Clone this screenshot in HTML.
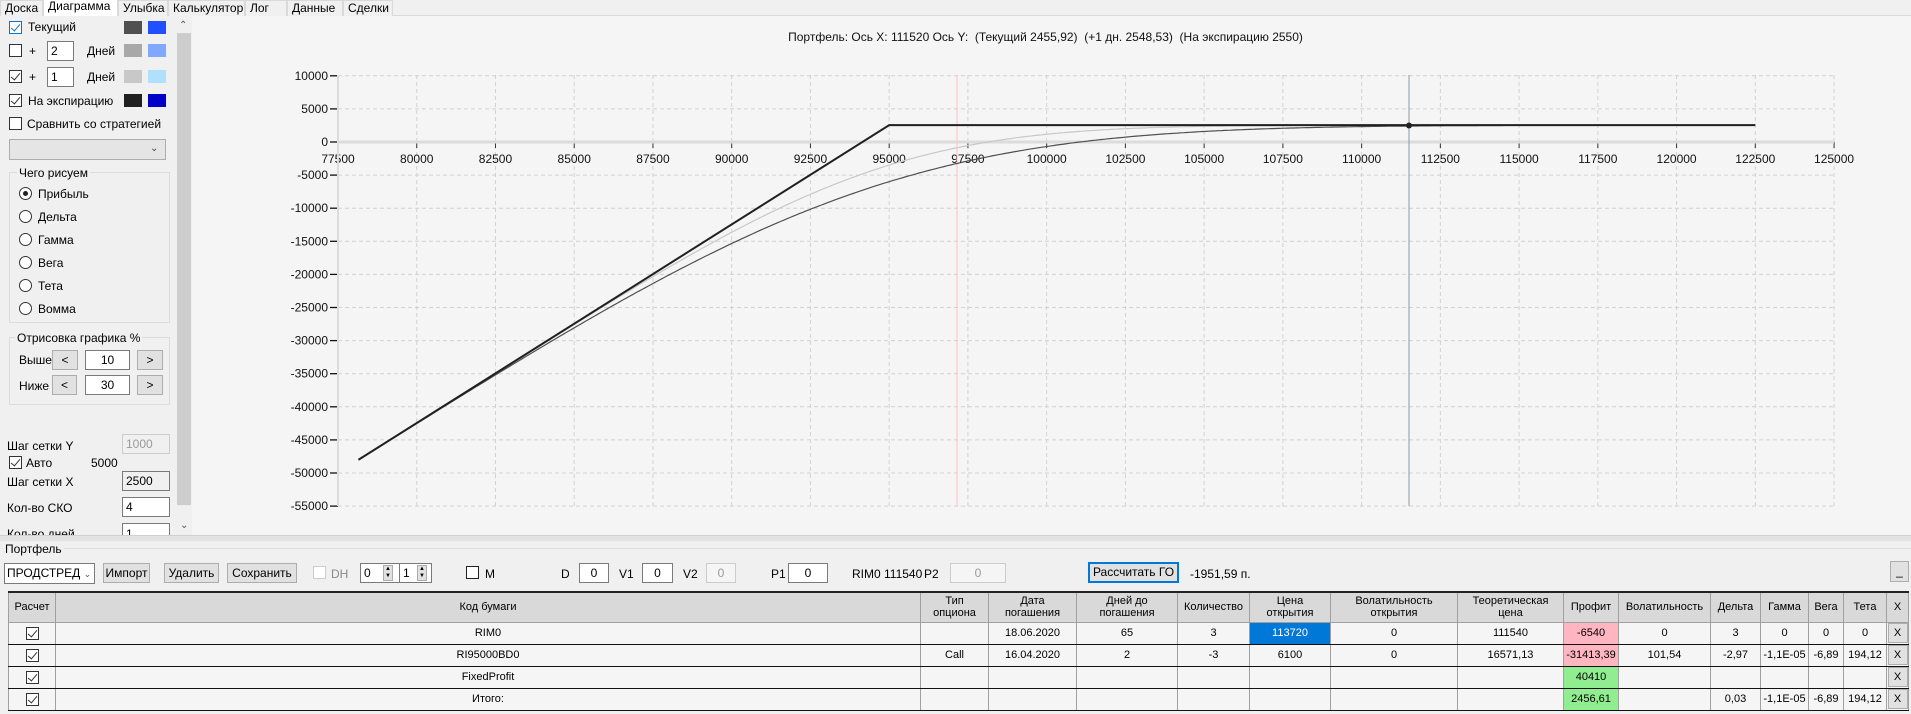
<!DOCTYPE html>
<html><head><meta charset="utf-8"><style>
*{box-sizing:border-box;margin:0;padding:0}
body{width:1911px;height:714px;background:#f0f0f0;font-family:"Liberation Sans",sans-serif;font-size:12px;color:#000;position:relative;overflow:hidden}
.a{position:absolute;white-space:nowrap}
.tab{position:absolute;top:0;height:16px;line-height:14px;border:1px solid #d9d9d9;border-bottom:none;padding:0 4px;background:#f0f0f0;font-size:12px}
.cb{position:absolute;width:13px;height:13px;border:1px solid #333;background:#fff}
.cb.on::after{content:"";position:absolute;left:3px;top:0px;width:4px;height:8px;border:solid #333;border-width:0 1.3px 1.3px 0;transform:rotate(40deg)}
.cb.blue{border-color:#0078d7}.cb.blue::after{border-color:#0078d7}
.sw{position:absolute;width:18px;height:13px}
.in{position:absolute;background:#fff;border:1px solid #7a7a7a;height:20px;line-height:18px;padding-left:3px;font-size:12px}
.rad{position:absolute;width:13px;height:13px;border:1px solid #333;border-radius:50%;background:#fff}
.btn{position:absolute;background:#e1e1e1;border:1px solid #adadad;text-align:center;line-height:18px;font-size:12px}
.grp{position:absolute;border:1px solid #dcdcdc}
.leg{position:absolute;background:#f0f0f0;padding:0 2px;font-size:12px}
table{position:absolute;left:8px;top:591px;border-collapse:collapse;font-size:11px;table-layout:fixed}
td,th{border:1px solid #a0a0a0;text-align:center;font-weight:normal;overflow:hidden;white-space:nowrap;padding:0}
th{background:#d9d9d9;height:30px;line-height:12px}
td{height:22px;line-height:20px;background:#f5f5f5}
tr.r td{border-bottom:1px solid #111}
.xb{display:block;margin:0 auto;width:20px;height:20px;background:#e1e1e1;border:1px solid #adadad;line-height:18px}
.tc{position:relative;display:inline-block;vertical-align:middle;width:13px;height:13px;border:1px solid #333;background:#fff}
.tc::after{content:"";position:absolute;left:3px;top:0px;width:4px;height:8px;border:solid #333;border-width:0 1.3px 1.3px 0;transform:rotate(40deg)}
</style></head><body>
<div class="a" style="left:192px;top:16px;width:1719px;height:520px;background:#f5f5f5"></div>
<svg class="a" style="left:0;top:0" width="1911" height="540" id="ch"></svg>
<div class="a" style="left:0;top:30px;width:1911px;text-align:center;font-size:12px;color:#111;padding-left:180px">Портфель: Ось X: 111520 Ось Y:&nbsp; (Текущий 2455,92)&nbsp; (+1 дн. 2548,53)&nbsp; (На экспирацию 2550)</div>

<div class="a" style="left:0;top:15px;width:1911px;height:1px;background:#d9d9d9"></div>
<div class="tab" style="left:0;width:43px">Доска</div>
<div class="tab" style="left:43px;width:75px;background:#fff;top:-2px;height:18px">Диаграмма</div>
<div class="tab" style="left:118px;width:50px">Улыбка</div>
<div class="tab" style="left:168px;width:77px">Калькулятор</div>
<div class="tab" style="left:245px;width:42px">Лог</div>
<div class="tab" style="left:287px;width:56px">Данные</div>
<div class="tab" style="left:343px;width:50px">Сделки</div>

<div class="a" style="left:0;top:16px;width:192px;height:520px;background:#f0f0f0"></div>
<div class="a" style="left:176px;top:17px;width:16px;height:519px;background:#f0f0f0"></div>
<div class="a" style="left:177px;top:33px;width:14px;height:472px;background:#cdcdcd"></div>
<div class="a" style="left:179px;top:20px;font-size:10px;color:#555">&#8963;</div>
<div class="a" style="left:180px;top:520px;font-size:10px;color:#555">&#8964;</div>

<div class="cb on blue" style="left:9px;top:21px"></div><div class="a" style="left:28px;top:20px">Текущий</div>
<div class="sw" style="left:124px;top:21px;background:#505050"></div><div class="sw" style="left:148px;top:21px;background:#2050ff"></div>
<div class="cb" style="left:9px;top:44px"></div><div class="a" style="left:29px;top:44px">+</div>
<div class="in" style="left:47px;top:41px;width:27px">2</div><div class="a" style="left:87px;top:44px">Дней</div>
<div class="sw" style="left:124px;top:44px;background:#a8a8a8"></div><div class="sw" style="left:148px;top:44px;background:#80a8ff"></div>
<div class="cb on" style="left:9px;top:70px"></div><div class="a" style="left:29px;top:70px">+</div>
<div class="in" style="left:47px;top:67px;width:27px">1</div><div class="a" style="left:87px;top:70px">Дней</div>
<div class="sw" style="left:124px;top:70px;background:#c8c8c8"></div><div class="sw" style="left:148px;top:70px;background:#b0e0ff"></div>
<div class="cb on" style="left:9px;top:94px"></div><div class="a" style="left:28px;top:94px">На экспирацию</div>
<div class="sw" style="left:124px;top:94px;background:#202020"></div><div class="sw" style="left:148px;top:94px;background:#0000c8"></div>
<div class="cb" style="left:9px;top:117px"></div><div class="a" style="left:27px;top:117px">Сравнить со стратегией</div>
<div class="a" style="left:9px;top:139px;width:157px;height:21px;background:#e5e5e5;border:1px solid #adadad"></div>
<div class="a" style="left:150px;top:143px;font-size:10px;color:#444">&#8964;</div>

<div class="grp" style="left:9px;top:172px;width:161px;height:151px"></div>
<div class="leg" style="left:17px;top:166px">Чего рисуем</div>
<div class="rad" style="left:19px;top:187px"><div style="position:absolute;left:3px;top:3px;width:5px;height:5px;border-radius:50%;background:#222"></div></div><div class="a" style="left:38px;top:187px">Прибыль</div>
<div class="rad" style="left:19px;top:210px"></div><div class="a" style="left:38px;top:210px">Дельта</div>
<div class="rad" style="left:19px;top:233px"></div><div class="a" style="left:38px;top:233px">Гамма</div>
<div class="rad" style="left:19px;top:256px"></div><div class="a" style="left:38px;top:256px">Вега</div>
<div class="rad" style="left:19px;top:279px"></div><div class="a" style="left:38px;top:279px">Тета</div>
<div class="rad" style="left:19px;top:302px"></div><div class="a" style="left:38px;top:302px">Вомма</div>

<div class="grp" style="left:9px;top:337px;width:161px;height:68px"></div>
<div class="leg" style="left:15px;top:331px">Отрисовка графика %</div>
<div class="a" style="left:19px;top:353px">Выше</div>
<div class="btn" style="left:52px;top:350px;width:26px;height:20px">&lt;</div>
<div class="in" style="left:85px;top:350px;width:45px;text-align:center;padding:0">10</div>
<div class="btn" style="left:137px;top:350px;width:26px;height:20px">&gt;</div>
<div class="a" style="left:19px;top:379px">Ниже</div>
<div class="btn" style="left:52px;top:375px;width:25px;height:20px">&lt;</div>
<div class="in" style="left:85px;top:375px;width:45px;text-align:center;padding:0">30</div>
<div class="btn" style="left:137px;top:375px;width:26px;height:20px">&gt;</div>

<div class="a" style="left:7px;top:439px">Шаг сетки Y</div>
<div class="in" style="left:122px;top:434px;width:48px;background:#f0f0f0;border-color:#ccc;color:#999">1000</div>
<div class="cb on" style="left:9px;top:456px"></div><div class="a" style="left:26px;top:456px">Авто</div><div class="a" style="left:91px;top:456px">5000</div>
<div class="a" style="left:7px;top:475px">Шаг сетки X</div>
<div class="in" style="left:122px;top:471px;width:48px;background:#f0f0f0">2500</div>
<div class="a" style="left:7px;top:501px">Кол-во СКО</div>
<div class="in" style="left:122px;top:497px;width:48px">4</div>
<div class="a" style="left:7px;top:527px;height:8px;overflow:hidden">Кол-во дней</div>
<div class="in" style="left:122px;top:523px;width:48px;height:13px;overflow:hidden;border-bottom:none;line-height:20px">1</div>

<div class="a" style="left:0;top:535px;width:1911px;height:6px;background:#e3e3e3;border-top:1px solid #d0d0d0"></div>

<div class="a" style="left:2px;top:548px;width:1909px;height:1px;background:#dcdcdc"></div>
<div class="leg" style="left:3px;top:542px">Портфель</div>
<div class="a" style="left:4px;top:563px;width:91px;height:21px;background:#fff;border:1px solid #7a7a7a;padding-left:2px;line-height:19px">ПРОДСТРЕД <span style="font-size:9px;color:#555">&#8964;</span></div>
<div class="btn" style="left:103px;top:563px;width:47px;height:20px">Импорт</div>
<div class="btn" style="left:164px;top:563px;width:55px;height:20px">Удалить</div>
<div class="btn" style="left:227px;top:563px;width:70px;height:20px">Сохранить</div>
<div class="cb" style="left:313px;top:566px;border-color:#ccc"></div><div class="a" style="left:331px;top:567px;color:#888">DH</div>
<div class="in" style="left:360px;top:563px;width:40px;height:20px">0</div>
<div class="a" style="left:383px;top:565px;width:10px;height:16px;background:#e1e1e1;border:1px solid #adadad;font-size:6px;line-height:7px;text-align:center">▲<br>▼</div>
<div class="in" style="left:399px;top:563px;width:33px;height:20px">1</div>
<div class="a" style="left:417px;top:565px;width:10px;height:16px;background:#e1e1e1;border:1px solid #adadad;font-size:6px;line-height:7px;text-align:center">▲<br>▼</div>
<div class="cb" style="left:466px;top:566px;border-color:#222"></div><div class="a" style="left:485px;top:567px">M</div>
<div class="a" style="left:561px;top:567px">D</div><div class="in" style="left:579px;top:563px;width:30px;text-align:center;padding:0">0</div>
<div class="a" style="left:619px;top:567px">V1</div><div class="in" style="left:642px;top:563px;width:31px;text-align:center;padding:0">0</div>
<div class="a" style="left:683px;top:567px">V2</div><div class="in" style="left:706px;top:563px;width:30px;text-align:center;padding:0;border-color:#ccc;color:#999;background:#f5f5f5">0</div>
<div class="a" style="left:771px;top:567px">P1</div><div class="in" style="left:788px;top:563px;width:40px;text-align:center;padding:0">0</div>
<div class="a" style="left:852px;top:567px">RIM0 111540</div><div class="a" style="left:924px;top:567px">P2</div>
<div class="in" style="left:950px;top:563px;width:56px;text-align:center;padding:0;border-color:#ccc;color:#999;background:#f5f5f5">0</div>
<div class="btn" style="left:1088px;top:562px;width:91px;height:21px;border:2px solid #0078d7;line-height:17px">Рассчитать ГО</div>
<div class="a" style="left:1190px;top:567px">-1951,59 п.</div>
<div class="btn" style="left:1890px;top:561px;width:19px;height:21px">_</div>

<table>
<colgroup><col style="width:47px"><col style="width:865px"><col style="width:68px"><col style="width:88px"><col style="width:101px"><col style="width:72px"><col style="width:81px"><col style="width:127px"><col style="width:106px"><col style="width:55px"><col style="width:92px"><col style="width:50px"><col style="width:48px"><col style="width:35px"><col style="width:43px"><col style="width:22px"></colgroup>
<tr style="border-top:2px solid #222"><th>Расчет</th><th>Код бумаги</th><th>Тип<br>опциона</th><th>Дата<br>погашения</th><th>Дней до<br>погашения</th><th>Количество</th><th>Цена<br>открытия</th><th>Волатильность<br>открытия</th><th>Теоретическая<br>цена</th><th>Профит</th><th>Волатильность</th><th>Дельта</th><th>Гамма</th><th>Вега</th><th>Тета</th><th>X</th></tr>
<tr class="r"><td><span class="tc"></span></td><td>RIM0</td><td></td><td>18.06.2020</td><td>65</td><td>3</td><td style="background:#0078d7;color:#fff">113720</td><td>0</td><td>111540</td><td style="background:#ffb6c1">-6540</td><td>0</td><td>3</td><td>0</td><td>0</td><td>0</td><td><span class="xb">X</span></td></tr>
<tr class="r"><td><span class="tc"></span></td><td>RI95000BD0</td><td>Call</td><td>16.04.2020</td><td>2</td><td>-3</td><td>6100</td><td>0</td><td>16571,13</td><td style="background:#ffb6c1">-31413,39</td><td>101,54</td><td>-2,97</td><td>-1,1E-05</td><td>-6,89</td><td>194,12</td><td><span class="xb">X</span></td></tr>
<tr class="r"><td><span class="tc"></span></td><td>FixedProfit</td><td></td><td></td><td></td><td></td><td></td><td></td><td></td><td style="background:#90ee90">40410</td><td></td><td></td><td></td><td></td><td></td><td><span class="xb">X</span></td></tr>
<tr class="r"><td><span class="tc"></span></td><td>Итого:</td><td></td><td></td><td></td><td></td><td></td><td></td><td></td><td style="background:#90ee90">2456,61</td><td></td><td>0,03</td><td>-1,1E-05</td><td>-6,89</td><td>194,12</td><td><span class="xb">X</span></td></tr>
</table>

<script>
(function(){
var s=document.getElementById('ch'),h='';
function X(v){return 338+(v-77500)/2500*78.74}
function Y(v){return 142-v/5000*33.1}
for(var i=0;i<=19;i++){var x=X(77500+i*2500);h+='<line x1="'+x+'" y1="75" x2="'+x+'" y2="506" stroke="#d2d2d2" stroke-dasharray="4,3"/>';
h+='<line x1="'+x+'" y1="142" x2="'+x+'" y2="148" stroke="#333"/>';
h+='<text x="'+x+'" y="163" font-size="12" text-anchor="middle" font-family="Liberation Sans" fill="#111">'+(77500+i*2500)+'</text>';}
for(var j=-11;j<=2;j++){var y=Y(j*5000);h+='<line x1="338" y1="'+y+'" x2="1834" y2="'+y+'" stroke="#d2d2d2" stroke-dasharray="4,3"/>';
h+='<line x1="330" y1="'+y+'" x2="338" y2="'+y+'" stroke="#111" stroke-width="1.3"/>';
h+='<text x="328" y="'+(y+4)+'" font-size="12" text-anchor="end" font-family="Liberation Sans" fill="#111">'+(j*5000)+'</text>';}
h+='<line x1="338" y1="142" x2="1834" y2="142" stroke="#dcdcdc" stroke-width="3"/>';
h+='<line x1="338" y1="75" x2="338" y2="506" stroke="#dcdcdc" stroke-width="2"/>';
h+='<line x1="957" y1="75" x2="957" y2="506" stroke="#ffc0c8"/>';
h+='<line x1="1409" y1="75" x2="1409" y2="506" stroke="#8a9aa8"/>';
function N(x){var t=1/(1+0.2316419*Math.abs(x)),d=0.3989423*Math.exp(-x*x/2),p=d*t*(0.3193815+t*(-0.3565638+t*(1.781478+t*(-1.821256+t*1.330274))));return x>0?1-p:p}
function C(S,T){var sv=1.0154*Math.sqrt(T),d1=Math.log(S/95000)/sv+sv/2;return S*N(d1)-95000*N(d1-sv)}
function pl(S,T){return 3*(S-113720)-3*(C(S,T)-6100)+40410}
function curve(T,col,w){var p='';for(var S=78150;S<=122500;S+=100){p+=(p?'L':'M')+X(S).toFixed(1)+','+Y(pl(S,T)).toFixed(1)}return '<path d="'+p+'" fill="none" stroke="'+col+'" stroke-width="'+w+'"/>'}
h+=curve(1/365,'#c8c8c8',1.2);
h+=curve(2/365,'#505050',1.2);
h+='<path d="M'+X(78150)+','+Y(-48000)+'L'+X(95000)+','+Y(2550)+'L'+X(122500)+','+Y(2550)+'" fill="none" stroke="#202020" stroke-width="2"/>';
h+='<circle cx="1409" cy="'+Y(2500)+'" r="3" fill="#222"/>';
s.innerHTML=h;
})();
</script>
</body></html>
